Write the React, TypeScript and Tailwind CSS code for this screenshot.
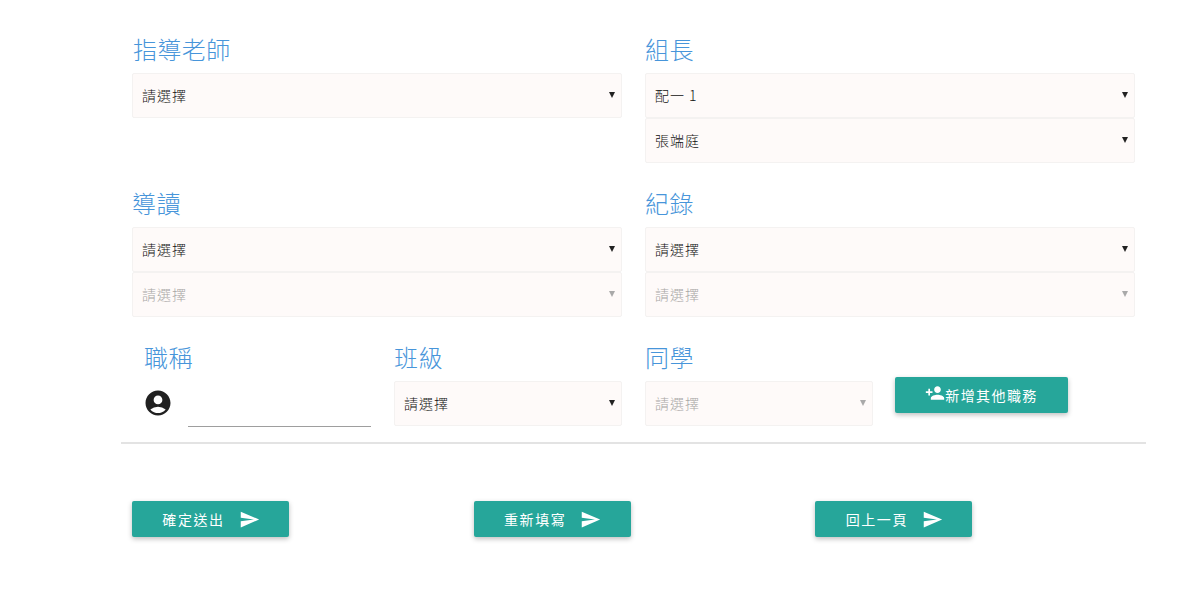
import { MdAccountCircle, MdPersonAdd, MdSend } from "react-icons/md"

const font = "font-['Noto_Sans_CJK_TC','Noto_Sans_CJK_SC',sans-serif]"

function Label({ text, className = "" }: { text: string; className?: string }) {
  return <h3 className={`h-9 text-[24px] leading-[23px] tracking-[0.4px] font-light text-[#4795da] ${className}`}>{text}</h3>
}

function Select({ value = "請選擇", disabled = false, className = "" }: { value?: string; disabled?: boolean; className?: string }) {
  return (
    <div className={`relative h-[45px] ${className}`}>
      <select
        disabled={disabled}
        defaultValue={value}
        className={`appearance-none w-full h-full bg-[#fefaf9] border border-[#f4f2f1] rounded-[2px] pl-[9px] text-[14px] font-light tracking-[1px] outline-none ${disabled ? "text-[#a8a6a5]" : "text-[#111111]"}`}
      >
        <option>{value}</option>
      </select>
      <svg viewBox="0 0 6 6" className={`absolute right-[7px] top-[19px] w-[6px] h-[6px] ${disabled ? "text-[#a9a9a9]" : "text-[#222222]"}`}>
        <path d="M0 0h6L3 6z" fill="currentColor" />
      </svg>
    </div>
  )
}

function ActionButton({ text }: { text: string }) {
  return (
    <button className="flex items-center justify-center gap-[14px] w-[157px] h-9 pl-px rounded-[2px] bg-[#26a69a] text-white text-[14px] tracking-[1.6px] shadow-[0_2px_5px_rgba(0,0,0,0.25)]">
      {text}
      <MdSend size={21} />
    </button>
  )
}

export default function App() {
  return (
    <div className={`w-[1178px] h-[590px] bg-white pt-[32px] pl-[121px] overflow-hidden ${font}`}>
      <div className="w-[1025px]">
        {/* 指導老師 / 組長 */}
        <div className="grid grid-cols-2 gap-x-[23px] px-[11px] mb-[28px]">
          <div>
            <Label text="指導老師" className="mt-[5px] pl-[1px]" />
            <Select />
          </div>
          <div>
            <Label text="組長" className="mt-[5px]" />
            <Select value="配一 1" />
            <Select value="張端庭" />
          </div>
        </div>

        {/* 導讀 / 紀錄 */}
        <div className="grid grid-cols-2 gap-x-[23px] px-[11px] mb-[28px]">
          <div>
            <Label text="導讀" />
            <Select />
            <Select disabled />
          </div>
          <div>
            <Label text="紀錄" />
            <Select />
            <Select disabled />
          </div>
        </div>

        {/* 職稱 / 班級 / 同學 */}
        <div className="flex px-[11px]">
          <div className="w-[239px] pl-[12px]">
            <Label text="職稱" />
            <div className="flex">
              <MdAccountCircle size={30} className="text-[#212121] -ml-[1px] mt-[7px]" />
              <div className="ml-[15px] w-[183px] h-[46px] -mb-px border-b border-[#9e9e9e]" />
            </div>
          </div>
          <div className="w-[228px] ml-[23px]">
            <Label text="班級" />
            <Select />
          </div>
          <div className="w-[228px] ml-[23px]">
            <Label text="同學" />
            <Select disabled />
          </div>
          <button className="flex items-center justify-center w-[173px] h-9 mt-[32px] ml-[22px] rounded-[2px] bg-[#26a69a] text-white text-[14px] tracking-[1.4px] shadow-[0_2px_5px_rgba(0,0,0,0.25)]">
            <MdPersonAdd size={20} className="-mt-1" />
            新增其他職務
          </button>
        </div>

        <div className="h-[2px] bg-[#e3e3e3] mt-[16px] mb-[57px]" />

        <div className="grid grid-cols-3">
          {["確定送出", "重新填寫", "回上一頁"].map((text) => (
            <div key={text} className="px-[11px]">
              <ActionButton text={text} />
            </div>
          ))}
        </div>
      </div>
    </div>
  )
}
